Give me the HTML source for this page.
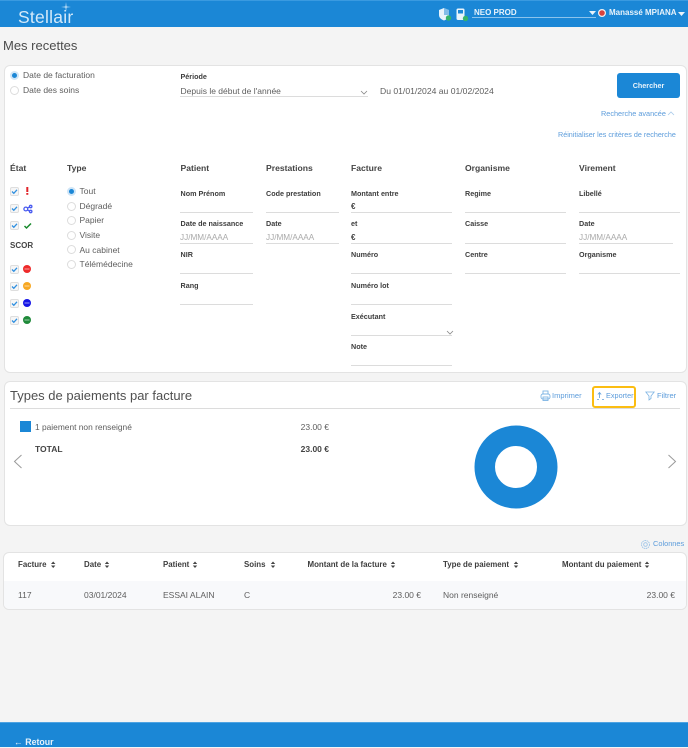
<!DOCTYPE html>
<html lang="fr"><head><meta charset="utf-8"><title>Mes recettes</title>
<style>
*{box-sizing:border-box}
html{margin:0;padding:0;background:#f4f4f4}
body{margin:0;padding:0;filter:blur(.35px)}
body{width:688px;height:747px;overflow:hidden;background:#f4f4f4;position:relative;font-family:"Liberation Sans",sans-serif;color:#555}
.a,.t,.l,.b,.h,.line,.cb,.r,.sc,svg{position:absolute}
.t,.l,.b,.h{white-space:nowrap;line-height:12px;height:12px}
.t{font-size:8.5px;color:#5e5e5e}
.l{font-size:7.2px;font-weight:bold;color:#3d3d3d}
.h{font-size:8.6px;font-weight:bold;color:#444}
.b{font-size:7.5px;color:#5c9cdb}
.line{height:1px;background:#dcdcdc}
.card{position:absolute;background:#fff;border:1px solid #e3e3e3;border-radius:6px}
.cb{left:10px;width:9px;height:9px;background:#f6f6f6;border:1px solid #dedede;border-radius:2px}
.r{width:9px;height:9px;border:1px solid #dcdcdc;border-radius:50%;background:#fff}
.r.on{background:#1b87d6;border:2px solid #cfe5f7}
.sc{left:23px;width:8px;height:8px;border-radius:50%}
.ph{color:#aaa;font-size:8.2px}
.th{font-size:7.9px;font-weight:bold;color:#3d3d3d}
</style></head><body>

<div class="a" style="left:0;top:0;width:688px;height:27px;background:#1b87d6;border-top:1px solid #3a9ae0"></div>
<div class="a" style="left:18px;top:6px;font-size:17.5px;line-height:22px;color:#d4e9f9;letter-spacing:.25px">Stellair</div>
<svg style="left:60px;top:1px" width="12" height="12" viewBox="0 0 12 12"><path d="M6 1 6.500 5.500 11 6 6.500 6.500 6 11 5.500 6.500 1 6 5.500 5.500Z" fill="#d4e9f9"/></svg>

<svg style="left:438px;top:7px" width="14" height="15" viewBox="0 0 14 15"><path d="M6 1 11 3V8C11 11 8.500 12.500 6 13.500 3.500 12.500 1 11 1 8V3Z" fill="#e8f3fb"/><path d="M6 1 11 3V8H6Z" fill="#1b87d6" opacity=".5"/><circle cx="10.500" cy="11" r="2.700" fill="#35b36b"/></svg>
<svg style="left:455px;top:7px" width="14" height="15" viewBox="0 0 14 15"><rect x="1.500" y="1.500" width="8" height="11.500" rx="1.500" fill="#e8f3fb"/><rect x="3" y="3" width="5" height="3.500" fill="#1b87d6"/><circle cx="10.500" cy="11.500" r="2.700" fill="#35b36b"/></svg>
<div class="t" style="left:474px;top:7px;font-size:8px;font-weight:bold;color:#e8f3fb">NEO PROD</div>
<div class="a" style="left:472px;top:17px;width:124px;height:1px;background:#8cc3ec"></div>
<svg style="left:589px;top:11px" width="7" height="4" viewBox="0 0 7 4"><path d="M0 0H7L3.500 4Z" fill="#e8f3fb"/></svg>
<svg style="left:598px;top:9px" width="8" height="8" viewBox="0 0 8 8"><circle cx="4" cy="4" r="4" fill="#f1f1f1"/><circle cx="4" cy="4" r="2.800" fill="#d9423c"/></svg>
<div class="t" style="left:609px;top:7px;font-size:8px;font-weight:bold;color:#e8f3fb">Manassé MPIANA</div>
<svg style="left:678px;top:12px" width="7" height="4" viewBox="0 0 7 4"><path d="M0 0H7L3.500 4Z" fill="#e8f3fb"/></svg>

<div class="a" style="left:3px;top:38px;font-size:13px;line-height:16px;color:#4c4c4c">Mes recettes</div>

<div class="card" style="left:4px;top:65px;width:683px;height:308px"></div>

<div class="r on" style="left:10px;top:71px"></div>
<div class="t" style="left:23px;top:69px">Date de facturation</div>
<div class="r" style="left:10px;top:86px"></div>
<div class="t" style="left:23px;top:84px">Date des soins</div>
<div class="l" style="left:180.500px;top:71px">Période</div>
<div class="t" style="left:180.500px;top:85px">Depuis le début de l'année</div>
<div class="line" style="left:180px;top:96px;width:188px"></div>
<svg style="left:360px;top:90px" width="8" height="5" viewBox="0 0 8 5"><path d="M1 1 4 4 7 1" fill="none" stroke="#888" stroke-width=".8"/></svg>
<div class="t" style="left:380px;top:84.500px;font-size:8.600px">Du 01/01/2024 au 01/02/2024</div>
<div class="a" style="left:617px;top:73px;width:63px;height:25px;background:#1b87d6;border-radius:3px;color:#e6f2fb;font-size:7.2px;font-weight:bold;text-align:center;line-height:25px">Chercher</div>
<div class="b" style="left:601px;top:107.500px;font-size:7.300px">Recherche avancée</div>
<svg style="left:667px;top:111px" width="8" height="5" viewBox="0 0 8 5"><path d="M1 4 4 1 7 4" fill="none" stroke="#a9cbea" stroke-width=".8"/></svg>
<div class="b" style="left:558px;top:129px;font-size:7.200px">Réinitialiser les critères de recherche</div>

<div class="h" style="left:10px;top:161.500px">État</div>
<div class="h" style="left:67px;top:161.500px">Type</div>
<div class="h" style="left:180.500px;top:161.500px">Patient</div>
<div class="h" style="left:266px;top:161.500px">Prestations</div>
<div class="h" style="left:351px;top:161.500px">Facture</div>
<div class="h" style="left:465px;top:161.500px">Organisme</div>
<div class="h" style="left:579px;top:161.500px">Virement</div>

<div class="cb" style="top:187px"></div><div class="cb" style="top:204px"></div><div class="cb" style="top:221px"></div>
<div class="cb" style="top:265px"></div><div class="cb" style="top:282px"></div><div class="cb" style="top:299px"></div><div class="cb" style="top:316px"></div>
<svg style="left:10px;top:187px" width="9" height="143" viewBox="0 0 9 143"><g fill="none" stroke="#2f8fe0" stroke-width="1.300"><path d="M2 4.500 3.800 6.300 7 2.800"/><path d="M2 21.500 3.800 23.300 7 19.800"/><path d="M2 38.500 3.800 40.300 7 36.800"/><path d="M2 82.500 3.800 84.300 7 80.800"/><path d="M2 99.500 3.800 101.300 7 97.800"/><path d="M2 116.500 3.800 118.300 7 114.800"/><path d="M2 133.500 3.800 135.300 7 131.800"/></g></svg>
<svg style="left:23px;top:186px" width="10" height="46" viewBox="0 0 10 46"><rect x="3.300" y="1" width="2" height="5" fill="#e0242a"/><rect x="3.300" y="7" width="2" height="1.800" fill="#e0242a"/>
<g fill="none" stroke="#4a5cf0" stroke-width="1.300"><circle cx="2.800" cy="23" r="1.900"/><circle cx="7.700" cy="20.500" r="1.200"/><circle cx="7.700" cy="25.500" r="1.200"/><path d="M4.500 22 6.500 21M4.500 24 6.500 25"/></g>
<path d="M1.500 40 3.500 42 8 37.500" fill="none" stroke="#178a2c" stroke-width="1.500"/></svg>
<div class="h" style="left:10px;top:239.500px;font-size:8px">SCOR</div>
<div class="sc" style="top:265px;background:#ee2a2a"></div>
<div class="sc" style="top:282px;background:#f7a823"></div>
<div class="sc" style="top:299px;background:#1616e6"></div>
<div class="sc" style="top:316px;background:#1f8a3a"></div>
<svg style="left:23px;top:265px" width="8" height="60" viewBox="0 0 8 60"><g stroke="#fff" stroke-width=".8" opacity=".75"><path d="M1.500 4H6.500M1.500 21H6.500M1.500 38H6.500M1.500 55H6.500"/></g></svg>

<div class="r on" style="left:67px;top:187px"></div><div class="t" style="left:79.500px;top:185px">Tout</div>
<div class="r" style="left:67px;top:202px"></div><div class="t" style="left:79.500px;top:200px">Dégradé</div>
<div class="r" style="left:67px;top:216px"></div><div class="t" style="left:79.500px;top:214px">Papier</div>
<div class="r" style="left:67px;top:231px"></div><div class="t" style="left:79.500px;top:229px">Visite</div>
<div class="r" style="left:67px;top:245px"></div><div class="t" style="left:79.500px;top:243.500px">Au cabinet</div>
<div class="r" style="left:67px;top:260px"></div><div class="t" style="left:79.500px;top:258px">Télémédecine</div>

<div class="l" style="left:180.500px;top:187.500px">Nom Prénom</div><div class="line" style="left:180px;top:212px;width:73px"></div>
<div class="l" style="left:180.500px;top:218px">Date de naissance</div><div class="t ph" style="left:180px;top:231.500px">JJ/MM/AAAA</div><div class="line" style="left:180px;top:243px;width:73px"></div>
<div class="l" style="left:180.500px;top:249px">NIR</div><div class="line" style="left:180px;top:273px;width:73px"></div>
<div class="l" style="left:180.500px;top:279.500px">Rang</div><div class="line" style="left:180px;top:304px;width:73px"></div>

<div class="l" style="left:266px;top:187.500px">Code prestation</div><div class="line" style="left:266px;top:212px;width:73px"></div>
<div class="l" style="left:266px;top:218px">Date</div><div class="t ph" style="left:266px;top:231.500px">JJ/MM/AAAA</div><div class="line" style="left:266px;top:243px;width:73px"></div>

<div class="l" style="left:351px;top:187.500px">Montant entre</div><div class="t" style="left:351px;top:201px;font-weight:bold;font-size:8px;color:#444">€</div><div class="line" style="left:351px;top:212px;width:101px"></div>
<div class="l" style="left:351px;top:218px">et</div><div class="t" style="left:351px;top:231.500px;font-weight:bold;font-size:8px;color:#444">€</div><div class="line" style="left:351px;top:243px;width:101px"></div>
<div class="l" style="left:351px;top:249px">Numéro</div><div class="line" style="left:351px;top:273px;width:101px"></div>
<div class="l" style="left:351px;top:279.500px">Numéro lot</div><div class="line" style="left:351px;top:304px;width:101px"></div>
<div class="l" style="left:351px;top:310.500px">Exécutant</div><div class="line" style="left:351px;top:335px;width:101px"></div>
<svg style="left:446px;top:330px" width="8" height="5" viewBox="0 0 8 5"><path d="M1 1 4 4 7 1" fill="none" stroke="#888" stroke-width=".8"/></svg>
<div class="l" style="left:351px;top:341px">Note</div><div class="line" style="left:351px;top:365px;width:101px"></div>

<div class="l" style="left:465px;top:187.500px">Regime</div><div class="line" style="left:465px;top:212px;width:101px"></div>
<div class="l" style="left:465px;top:218px">Caisse</div><div class="line" style="left:465px;top:243px;width:101px"></div>
<div class="l" style="left:465px;top:249px">Centre</div><div class="line" style="left:465px;top:273px;width:101px"></div>

<div class="l" style="left:579px;top:187.500px">Libellé</div><div class="line" style="left:579px;top:212px;width:101px"></div>
<div class="l" style="left:579px;top:218px">Date</div><div class="t ph" style="left:579px;top:231.500px">JJ/MM/AAAA</div><div class="line" style="left:579px;top:243px;width:94px"></div>
<div class="l" style="left:579px;top:249px">Organisme</div><div class="line" style="left:579px;top:273px;width:101px"></div>

<div class="card" style="left:4px;top:381px;width:683px;height:145px"></div>
<div class="a" style="left:10px;top:388px;font-size:13px;line-height:16px;color:#505050;white-space:nowrap">Types de paiements par facture</div>
<div class="line" style="left:10px;top:408px;width:670px"></div>
<svg style="left:540px;top:390px" width="11" height="12" viewBox="0 0 11 12"><g fill="none" stroke="#7db4e4" stroke-width=".9"><rect x="3" y="1" width="5" height="3"/><rect x="1" y="4" width="9" height="5" rx="2"/><rect x="3" y="7" width="5" height="3.500"/></g></svg>
<div class="b" style="left:552px;top:390px">Imprimer</div>
<div class="a" style="left:592px;top:386px;width:44px;height:22px;border:2px solid #fbbd12;border-radius:3px"></div>
<svg style="left:596px;top:391px" width="9" height="10" viewBox="0 0 9 10"><path d="M3.500 7V2M1.800 3.500 3.500 1.500 5.200 3.500M1 8.500H3M6 8.500H8" fill="none" stroke="#5f9fdc" stroke-width=".8"/></svg>
<div class="b" style="left:606px;top:390px;font-size:7.300px">Exporter</div>
<svg style="left:645px;top:391px" width="10" height="10" viewBox="0 0 10 10"><path d="M.8 1H9.200L6 5V7.500L4 9V5Z" fill="none" stroke="#7db4e4" stroke-width=".8"/></svg>
<div class="b" style="left:657px;top:390px">Filtrer</div>

<div class="a" style="left:20px;top:421px;width:11px;height:11px;background:#1b87d6"></div>
<div class="t" style="left:35px;top:421px;font-size:8.400px">1 paiement non renseigné</div>
<div class="t" style="right:359px;top:420.500px">23.00 €</div>
<div class="t" style="left:35px;top:442.500px;font-weight:bold;color:#444">TOTAL</div>
<div class="t" style="right:359px;top:442.500px;font-weight:bold;color:#444">23.00 €</div>
<svg style="left:13px;top:454px" width="10" height="15" viewBox="0 0 10 15"><path d="M8.500 1 1.500 7.500 8.500 14" fill="none" stroke="#9a9a9a" stroke-width="1"/></svg>
<svg style="left:667px;top:454px" width="10" height="15" viewBox="0 0 10 15"><path d="M1.500 1 8.500 7.500 1.500 14" fill="none" stroke="#9a9a9a" stroke-width="1"/></svg>
<svg style="left:472px;top:423px" width="88" height="88" viewBox="0 0 88 88"><circle cx="44" cy="44" r="31.250" fill="none" stroke="#1b87d6" stroke-width="20.500"/></svg>

<svg style="left:640px;top:539px" width="11" height="11" viewBox="0 0 11 11"><g fill="none" stroke="#9dc4e8" stroke-width=".9"><circle cx="5.500" cy="5.500" r="1.800"/><circle cx="5.500" cy="5.500" r="4" stroke-dasharray="1.600 .6"/></g></svg>
<div class="b" style="left:653px;top:538px;font-size:7.400px">Colonnes</div>

<div class="card" style="left:3px;top:552px;width:684px;height:58px;overflow:hidden">
<div class="a" style="left:0;top:28px;width:684px;height:30px;background:#f8f9fb"></div>
</div>
<div class="t th" style="left:18px;top:559px">Facture</div>
<div class="t th" style="left:84px;top:559px">Date</div>
<div class="t th" style="left:163px;top:559px">Patient</div>
<div class="t th" style="left:244px;top:559px">Soins</div>
<div class="t th" style="left:307.500px;top:559px">Montant de la facture</div>
<div class="t th" style="left:443px;top:559px">Type de paiement</div>
<div class="t th" style="left:562px;top:559px">Montant du paiement</div>
<svg style="left:0;top:561px" width="688" height="8" viewBox="0 0 688 8"><g fill="#444"><path d="M51 3 53.200 .5 55.400 3ZM51 4.500 53.200 7 55.400 4.500Z"/><path d="M104.800 3 107 .5 109.200 3ZM104.800 4.500 107 7 109.200 4.500Z"/><path d="M192.800 3 195 .5 197.200 3ZM192.800 4.500 195 7 197.200 4.500Z"/><path d="M270.800 3 273 .5 275.200 3ZM270.800 4.500 273 7 275.200 4.500Z"/><path d="M390.800 3 393 .5 395.200 3ZM390.800 4.500 393 7 395.200 4.500Z"/><path d="M513.800 3 516 .5 518.200 3ZM513.800 4.500 516 7 518.200 4.500Z"/><path d="M644.800 3 647 .5 649.200 3ZM644.800 4.500 647 7 649.200 4.500Z"/></g></svg>
<div class="t" style="left:18px;top:588.500px">117</div>
<div class="t" style="left:84px;top:588.500px">03/01/2024</div>
<div class="t" style="left:163px;top:588.500px">ESSAI ALAIN</div>
<div class="t" style="left:244px;top:588.500px">C</div>
<div class="t" style="right:267px;top:588.500px">23.00 €</div>
<div class="t" style="left:443px;top:588.500px">Non renseigné</div>
<div class="t" style="right:13px;top:588.500px">23.00 €</div>

<div class="a" style="left:0;top:722px;width:688px;height:25px;background:#1b87d6;border-top:1px solid #4ea3e2"></div>
<div class="t" style="left:14px;top:736px;font-size:8.800px;font-weight:bold;color:#e6f2fb">← Retour</div>
</body></html>
